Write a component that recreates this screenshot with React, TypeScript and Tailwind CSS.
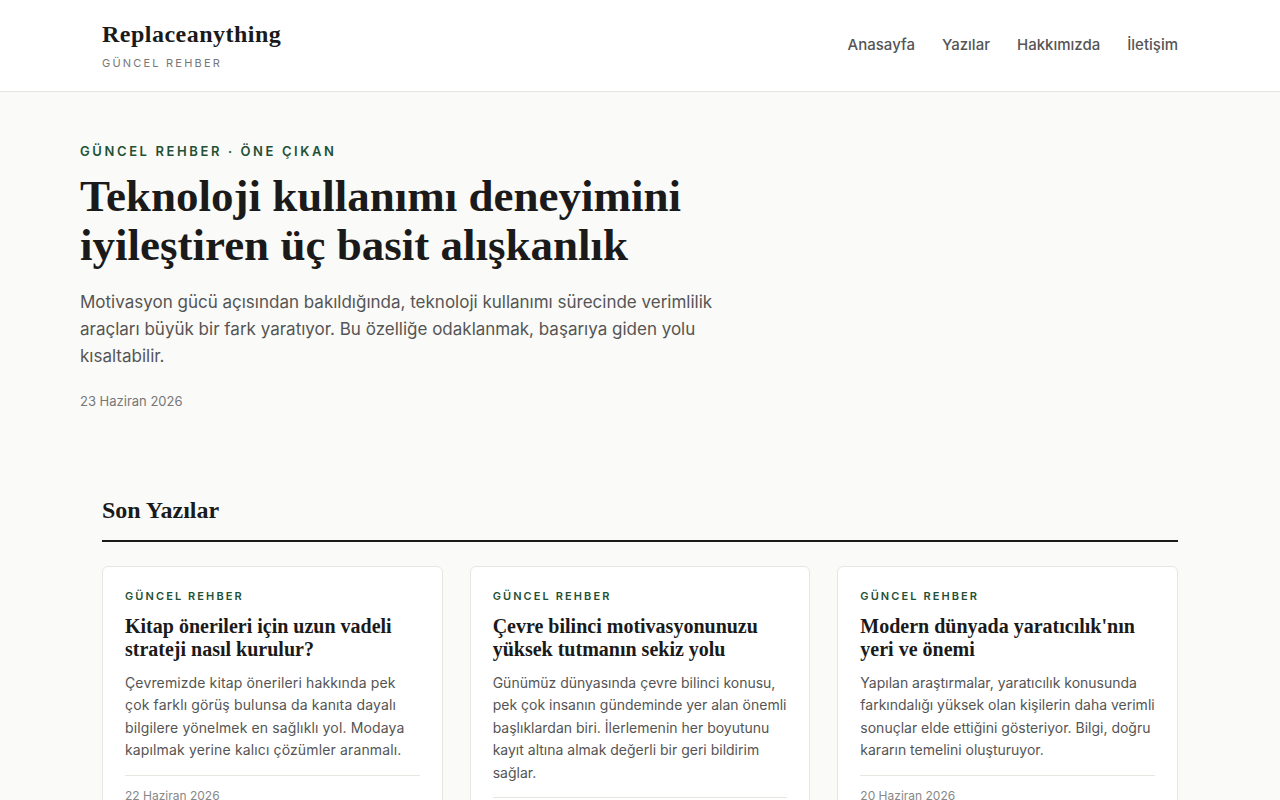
const serif = { fontFamily: '"Liberation Serif", "DejaVu Serif", serif' };

const NAV = ['Anasayfa', 'Yazılar', 'Hakkımızda', 'İletişim'];

const POSTS = [
    {
        title: 'Kitap önerileri için uzun vadeli strateji nasıl kurulur?',
        excerpt: 'Çevremizde kitap önerileri hakkında pek çok farklı görüş bulunsa da kanıta dayalı bilgilere yönelmek en sağlıklı yol. Modaya kapılmak yerine kalıcı çözümler aranmalı.',
        date: '22 Haziran 2026',
        track: 'tracking-[0.01em]',
    },
    {
        title: 'Çevre bilinci motivasyonunuzu yüksek tutmanın sekiz yolu',
        excerpt: 'Günümüz dünyasında çevre bilinci konusu, pek çok insanın gündeminde yer alan önemli başlıklardan biri. İlerlemenin her boyutunu kayıt altına almak değerli bir geri bildirim sağlar.',
        date: '21 Haziran 2026',
        track: 'tracking-normal',
    },
    {
        title: "Modern dünyada yaratıcılık'nın yeri ve önemi",
        excerpt: 'Yapılan araştırmalar, yaratıcılık konusunda farkındalığı yüksek olan kişilerin daha verimli sonuçlar elde ettiğini gösteriyor. Bilgi, doğru kararın temelini oluşturuyor.',
        date: '20 Haziran 2026',
        track: 'tracking-normal',
    },
];

export default function App() {
    return (
        <div className="min-h-screen bg-[#fafaf8] text-[#1a1a1a]" style={{ fontFamily: 'Inter, "Liberation Sans", sans-serif' }}>
            <header className="bg-white border-b border-[#e6e4df]">
                <div className="max-w-[1076px] mx-auto h-[91px] flex items-center justify-between">
                    <div className="flex flex-col">
                        <span className="text-[24px] leading-[30px] font-bold text-[#1a1a1a] tracking-[0.02em]" style={serif}>Replaceanything</span>
                        <span className="text-[11px] tracking-[0.2em] text-[#777] mt-[6px]">GÜNCEL REHBER</span>
                    </div>
                    <nav className="flex items-center gap-[27px] text-[15px] font-medium text-[#555]">
                        {NAV.map(n => (
                            <a key={n} href="#" className="hover:text-[#1a1a1a]">{n}</a>
                        ))}
                    </nav>
                </div>
            </header>

            <section className="max-w-[1120px] mx-auto pt-[50px] pb-[84px]">
                <div className="text-[13px] font-semibold tracking-[0.2em] text-[#1f5135]">GÜNCEL REHBER · ÖNE ÇIKAN</div>
                <h1 className="mt-[10px] max-w-[720px] text-[45px] leading-[49px] font-bold text-[#1a1a1a]" style={serif}>
                    Teknoloji kullanımı deneyimini iyileştiren üç basit alışkanlık
                </h1>
                <p className="mt-[19px] max-w-[660px] text-[17px] leading-[27px] text-[#555]">
                    Motivasyon gücü açısından bakıldığında, teknoloji kullanımı sürecinde verimlilik araçları büyük bir fark yaratıyor. Bu özelliğe odaklanmak, başarıya giden yolu kısaltabilir.
                </p>
                <div className="mt-[22px] text-[13px] text-[#777]">23 Haziran 2026</div>
            </section>

            <section className="max-w-[1076px] mx-auto">
                <h2 className="text-[24px] leading-[30px] font-bold pb-[15px] border-b-2 border-[#1a1a1a]" style={serif}>Son Yazılar</h2>
                <div className="grid grid-cols-3 gap-[27px] mt-[24px]">
                    {POSTS.map(p => (
                        <article key={p.title} className="bg-white border border-[#e8e6e0] rounded-[6px] px-[22px] pt-[21px] pb-[20px]">
                            <div className="text-[11px] font-semibold tracking-[0.19em] text-[#1f5135]">GÜNCEL REHBER</div>
                            <h3 className="mt-[10px] text-[20px] leading-[23px] font-bold text-[#1a1a1a]" style={serif}>{p.title}</h3>
                            <p className={`mt-[11px] text-[14px] leading-[22.5px] text-[#555] ${p.track}`}>{p.excerpt}</p>
                            <div className="mt-[13px] pt-[11px] border-t border-[#e8e6e0] text-[12px] text-[#888]">{p.date}</div>
                        </article>
                    ))}
                </div>
            </section>
        </div>
    );
}
